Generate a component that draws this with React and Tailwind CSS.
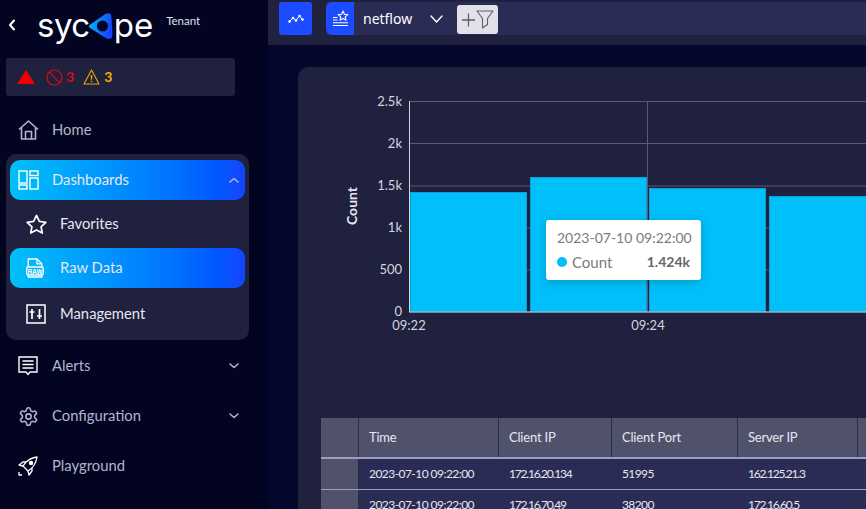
import React from "react";

const font = { fontFamily: "Lato, 'Noto Sans', sans-serif" };

function Chevron({ up, className = "" }) {
  return (
    <svg width="10" height="6" viewBox="0 0 10 6" className={className} fill="none" stroke="currentColor" strokeWidth="1.6" strokeLinecap="round" strokeLinejoin="round">
      <path d={up ? "M1 5 L5 1.5 L9 5" : "M1 1 L5 4.5 L9 1"} />
    </svg>
  );
}

const HomeIcon = () => (
  <svg width="21" height="20" viewBox="0 0 21 20" fill="none" stroke="#b4b6cc" strokeWidth="1.6" strokeLinejoin="round">
    <path d="M1 9.5 L10.5 1 L20 9.5" />
    <path d="M3.5 7.5 V19 H17.5 V7.5" />
    <path d="M7.5 19 V11.5 H13.5 V19" />
  </svg>
);
const DashIcon = () => (
  <svg width="21" height="20" viewBox="0 0 21 20" fill="none" stroke="#fff" strokeWidth="1.4">
    <rect x="1" y="1" width="8" height="12" />
    <rect x="12" y="1" width="8" height="4.5" />
    <rect x="1" y="15" width="8" height="4" />
    <rect x="12" y="8" width="8" height="11" />
  </svg>
);
const StarIcon = () => (
  <svg width="21" height="20" viewBox="0 0 22 21" fill="none" stroke="#fff" strokeWidth="1.8" strokeLinejoin="round">
    <path d="M11 1.5 L14 7.8 L20.8 8.7 L15.8 13.4 L17.1 20 L11 16.7 L4.9 20 L6.2 13.4 L1.2 8.7 L8 7.8 Z" />
  </svg>
);
const RawIcon = () => (
  <svg width="18" height="20" viewBox="0 0 18 20" fill="none" stroke="#fff" strokeWidth="1.3">
    <path d="M2.2 9 V1 H11 L15.8 5.8 V9" />
    <path d="M11 1 V5.8 H15.8" />
    <path d="M2.2 17 V19 H15.8 V17" />
    <rect x="0.7" y="9" width="16.6" height="8" rx="1.5" />
    <text x="9" y="15.6" textAnchor="middle" fontSize="6.5" fontWeight="700" fill="#fff" stroke="none" fontFamily="Liberation Sans">RAW</text>
  </svg>
);
const MgmtIcon = () => (
  <svg width="20" height="20" viewBox="0 0 20 20" fill="none" stroke="#fff" strokeWidth="1.5">
    <rect x="1" y="1" width="18" height="18" />
    <path d="M6 15 V5 M3.5 8 H8.5 M13.5 5 V15 M11 12 H16" strokeWidth="1.7" />
  </svg>
);
const AlertsIcon = () => (
  <svg width="20" height="20" viewBox="0 0 20 20" fill="none" stroke="#fff" strokeWidth="1.4">
    <path d="M1 1 H19 V16 H12 L10 18.5 L8 16 H1 Z" />
    <path d="M4.5 5 H15.5 M4.5 8.5 H15.5 M4.5 12 H15.5" />
  </svg>
);
const GearIcon = () => (
  <svg width="21" height="21" viewBox="0 0 24 24" fill="none" stroke="#b4b6cc" strokeWidth="1.8" strokeLinejoin="round">
    <path d="M12.22 2h-.44a2 2 0 0 0-2 2v.18a2 2 0 0 1-1 1.73l-.43.25a2 2 0 0 1-2 0l-.15-.08a2 2 0 0 0-2.73.73l-.22.38a2 2 0 0 0 .73 2.73l.15.1a2 2 0 0 1 1 1.72v.51a2 2 0 0 1-1 1.74l-.15.09a2 2 0 0 0-.73 2.73l.22.38a2 2 0 0 0 2.73.73l.15-.08a2 2 0 0 1 2 0l.43.25a2 2 0 0 1 1 1.73V20a2 2 0 0 0 2 2h.44a2 2 0 0 0 2-2v-.18a2 2 0 0 1 1-1.73l.43-.25a2 2 0 0 1 2 0l.15.08a2 2 0 0 0 2.73-.73l.22-.39a2 2 0 0 0-.73-2.73l-.15-.08a2 2 0 0 1-1-1.74v-.5a2 2 0 0 1 1-1.74l.15-.09a2 2 0 0 0 .73-2.73l-.22-.38a2 2 0 0 0-2.73-.73l-.15.08a2 2 0 0 1-2 0l-.43-.25a2 2 0 0 1-1-1.73V4a2 2 0 0 0-2-2z" />
    <circle cx="12" cy="12" r="3" />
  </svg>
);
const RocketIcon = () => (
  <svg width="20" height="20" viewBox="0 0 20 20" fill="none" stroke="#fff" strokeWidth="1.3" strokeLinejoin="round">
    <path d="M19 1 C12 2 8 5 5 10 L10 15 C15 12 18 8 19 1 Z" />
    <path d="M5 10 L1 9 L5 6 H8 M10 15 L11 19 L14 15 V12" />
    <circle cx="13" cy="7" r="1.6" fill="#fff" />
    <path d="M1 16 V19 H4" />
  </svg>
);

function NavRow({ icon, label, chevron, className = "" }) {
  return (
    <div className={`flex items-center w-[239px] h-[40px] pl-[18px] ${className}`}>
      <span className="w-[34px] flex items-center">{icon}</span>
      <span className="text-[14.8px] text-[#b4b6cc] flex-1 -translate-y-px">{label}</span>
      {chevron && <Chevron className="text-[#b4b6cc]" />}
    </div>
  );
}

function SubRow({ icon, label, active, className = "" }) {
  return (
    <div className={`flex items-center h-[40px] pl-[16px] rounded-[10px] ${active ? "bg-gradient-to-r from-[#00c0f8] to-[#1444ff]" : ""} ${className}`}>
      <span className="w-[34px] flex items-center">{icon}</span>
      <span className="text-[14.8px] text-[#e6e7f0] -translate-y-px">{label}</span>
    </div>
  );
}

function Sidebar() {
  return (
    <aside className="w-[268px] h-full bg-[#020421] shrink-0 flex flex-col overflow-hidden">
      <div className="h-[58px] flex items-start">
        <svg width="8" height="12" viewBox="0 0 8 12" className="mt-[19px] ml-[8px]" fill="none" stroke="#fff" strokeWidth="2" strokeLinecap="round" strokeLinejoin="round">
          <path d="M6 1.5 L2 6 L6 10.5" />
        </svg>
        <div className="flex items-start ml-[21px] mt-[5px] h-[40px] text-[33px] leading-[40px] text-white" style={{ fontFamily: "Inter, sans-serif" }}>
          <span className="tracking-[-0.5px]">syc</span>
          <svg width="26" height="28" viewBox="0 0 26 28" className="ml-[-2px] mt-[8px] shrink-0">
            <defs>
              <linearGradient id="lg" x1="0" x2="1" y1="0" y2="0.3">
                <stop offset="0" stopColor="#00c0f8" />
                <stop offset="1" stopColor="#1444ff" />
              </linearGradient>
            </defs>
            <path d="M1.5 12 L17 1.2 Q23 -1.5 23.5 4.5 L24.5 21 Q24.5 27.5 18.5 25.5 L2 15 Q0 13.5 1.5 12 Z" fill="url(#lg)" />
            <circle cx="14.5" cy="13" r="5.5" fill="#020421" />
          </svg>
          <span className="ml-[0px]">pe</span>
        </div>
        <span className="text-[11.5px] text-[#dfe0ea] ml-[13px] mt-[12px]">Tenant</span>
      </div>
      <div className="ml-[6px] w-[229px] h-[38px] bg-[#20213f] rounded-[3px] flex items-center pl-[11px]">
        <svg width="18" height="14" viewBox="0 0 18 14"><path d="M9 0 L18 14 H0 Z" fill="#f00000" /></svg>
        <svg width="17" height="17" viewBox="0 0 17 17" className="ml-[11px]" fill="none" stroke="#d90a14" strokeWidth="1.2">
          <circle cx="8.5" cy="8.5" r="7.5" />
          <path d="M3.2 3.2 L13.8 13.8" />
        </svg>
        <span className="text-[14px] font-bold text-[#d90a14] ml-[3px] -translate-y-px">3</span>
        <svg width="17" height="16" viewBox="0 0 17 16" className="ml-[9px]" fill="none" stroke="#f0a800" strokeWidth="1.1" strokeLinejoin="round">
          <path d="M8.5 1 L16 15 H1 Z" />
          <path d="M8.5 6 V10.5 M8.5 11.8 V13" strokeWidth="1.4" />
        </svg>
        <span className="text-[14px] font-bold text-[#f5ae00] ml-[4px] -translate-y-px">3</span>
      </div>
      <NavRow icon={<HomeIcon />} label="Home" className="mt-[14px]" />
      <div className="ml-[6px] w-[243px] mt-[4px] py-[6px] px-[4px] bg-[#20213f] rounded-[10px]">
        <div className="flex items-center h-[40px] pl-[8px] pr-[6px] rounded-[10px] bg-gradient-to-r from-[#00c0f8] to-[#1444ff]">
          <span className="w-[34px] flex items-center"><DashIcon /></span>
          <span className="text-[14.8px] text-[#e6e7f0] flex-1 -translate-y-px">Dashboards</span>
          <Chevron up className="text-[#b4b6cc]" />
        </div>
        <SubRow icon={<StarIcon />} label="Favorites" className="mt-[4px]" />
        <SubRow icon={<RawIcon />} label="Raw Data" active className="mt-[4px]" />
        <SubRow icon={<MgmtIcon />} label="Management" className="mt-[6px]" />
      </div>
      <NavRow icon={<AlertsIcon />} label="Alerts" chevron className="mt-[6px]" />
      <NavRow icon={<GearIcon />} label="Configuration" chevron className="mt-[10px]" />
      <NavRow icon={<RocketIcon />} label="Playground" className="mt-[10px]" />
    </aside>
  );
}

function TopBar() {
  return (
    <div className="h-[45px] bg-[#20213f] flex items-start pt-[2px] pl-[11px] shrink-0">
      <div className="w-[33px] h-[33px] bg-[#1d4bff] rounded-[3px] flex items-center justify-center">
        <svg width="16" height="10" viewBox="0 0 16 10" fill="none" stroke="#fff" strokeWidth="1">
          <path d="M1.5 7.5 L5 4 L8 6.5 L11.5 2 L14.5 5.5" />
          <g fill="#fff" stroke="none">
            <circle cx="1.5" cy="7.5" r="1.3" /><circle cx="5" cy="4" r="1.3" /><circle cx="8" cy="6.5" r="1.3" /><circle cx="11.5" cy="2" r="1.3" /><circle cx="14.5" cy="5.5" r="1.3" />
          </g>
        </svg>
      </div>
      <div className="ml-[14px] flex-1 h-[33px] bg-[#2b2c55] rounded-l-[3px] flex items-center">
        <div className="w-[28px] h-[33px] bg-[#1d4bff] rounded-l-[6px] flex items-center justify-center">
          <svg width="17" height="17" viewBox="0 0 17 17" fill="none" stroke="#fff" strokeWidth="1.1">
            <path d="M11 1 L12.4 4.3 L15.8 4.6 L13.2 6.9 L14 10.3 L11 8.5 L8 10.3 L8.8 6.9 L6.2 4.6 L9.6 4.3 Z" strokeLinejoin="round" />
            <path d="M1 7.5 H5.5 M1 10 H5.5 M1 12.7 H16 M1 15.5 H16" />
          </svg>
        </div>
        <span className="ml-[9px] text-[14px] text-white" style={{ fontFamily: "'Noto Sans', sans-serif" }}>netflow</span>
        <svg width="13" height="8" viewBox="0 0 13 8" className="ml-[18px]" fill="none" stroke="#fff" strokeWidth="1.4" strokeLinecap="round" strokeLinejoin="round">
          <path d="M1 1 L6.5 7 L12 1" />
        </svg>
        <div className="ml-[14px] w-[41px] h-[29px] bg-[#e3e1e8] rounded-[3px] flex items-center justify-center mt-[1px]">
          <svg width="33" height="19" viewBox="0 0 33 19" fill="none" stroke="#5d5c70" strokeWidth="1.1" strokeLinejoin="round">
            <path d="M1 10 H14 M7.5 3.5 V16.5" strokeWidth="1.3" />
            <path d="M16 1 H32 L26.5 8.5 V14.5 L21.5 18 V8.5 Z" />
          </svg>
        </div>
      </div>
    </div>
  );
}

function Tooltip() {
  return (
    <div className="absolute left-[546px] top-[220px] w-[155px] h-[60px] bg-white rounded-[3px] shadow-[0_2px_10px_rgba(0,0,0,0.2)] px-[11px] pt-[9px] text-[#7b7b7b] text-[14px] leading-[18px]">
      <div className="whitespace-nowrap">2023-07-10 09:22:00</div>
      <div className="flex items-center mt-[6px]">
        <span className="w-[10px] h-[10px] rounded-full bg-[#00bff9] mr-[5px]" />
        <span className="flex-1 text-[15px]">Count</span>
        <span className="font-bold text-[#666]">1.424k</span>
      </div>
    </div>
  );
}

function Chart() {
  const bars = [
    { x: 410, w: 117, top: 192 },
    { x: 530, w: 117, top: 177 },
    { x: 649, w: 117, top: 188 },
    { x: 769, w: 118, top: 196 },
  ];
  const ticks = [["2.5k", 101.5, 105.5], ["2k", 143.5, 147.5], ["1.5k", 186, 189.5], ["1k", 228, 231.5], ["500", 270, 273.5], ["0", 312, 315.5]];
  return (
    <svg width="568" height="280" viewBox="0 0 568 280" className="block" style={font}>
      <g transform="translate(-298 -67)">
        {ticks.map(([l, y, by]) => (
          <g key={l}>
            <line x1="409" x2="866" y1={y} y2={y} stroke="#5a5a78" />
            <text x={402} y={by} textAnchor="end" fontSize="13" fill="#d5d5de">{l}</text>
          </g>
        ))}
        <line x1="647.5" x2="647.5" y1="101" y2="312" stroke="#5a5a78" />
        {bars.map((b) => (
          <rect key={b.x} x={b.x + 0.5} y={b.top + 0.5} width={b.w - 1} height={312 - b.top - 1} fill="#00bff9" stroke="#0a9fd8" />
        ))}
        <line x1="409.5" x2="409.5" y1="101" y2="312" stroke="#d5d5de" />
        <line x1="409" x2="866" y1="312" y2="312" stroke="#c8d4e6" />
        <text x="409" y="330" textAnchor="middle" fontSize="13" fill="#d5d5de">09:22</text>
        <text x="648" y="330" textAnchor="middle" fontSize="13" fill="#d5d5de">09:24</text>
        <text transform="translate(356.5 206) rotate(-90)" textAnchor="middle" fontSize="14" fontWeight="700" fill="#e6e6ee">Count</text>
      </g>
    </svg>
  );
}

const cols = ["w-[38px]", "w-[140px]", "w-[113px]", "w-[126px]", "w-[120px]"];

function Table() {
  const rows = [
    ["2023-07-10 09:22:00", "172.16.20.134", "51995", "162.125.21.3"],
    ["2023-07-10 09:22:00", "172.16.70.49", "38200", "172.16.60.5"],
  ];
  const track = ["tracking-[-0.55px]", "tracking-[-1.2px]", "tracking-[-0.6px]", "tracking-[-1.2px]", ""];
  return (
    <div className="mt-[71px] ml-[23px] text-[12px] text-[#e6e7f0]">
      <div className="flex h-[41px] bg-[#50516b] border-b-[2px] border-[#9c9dc0] text-[13px] tracking-[-0.2px]">
        {["", "Time", "Client IP", "Client Port", "Server IP", ""].map((t, i) => (
          <div key={i} className={`${cols[i] || "flex-1"} shrink-0 border-r border-[#2a2b4d] pl-[10px] flex items-center`}>{t}</div>
        ))}
      </div>
      {rows.map((r, ri) => (
        <div key={ri} className="flex h-[31px] bg-[#2b2c55] border-b border-[#9c9dc0]">
          <div className={`${cols[0]} shrink-0 bg-[#50516b] border-r border-[#2a2b4d]`} />
          {[...r, ""].map((t, i) => (
            <div key={i} className={`${cols[i + 1] || "flex-1"} shrink-0 ${track[i]} border-r border-[#2a2b4d] pl-[10px] flex items-center`}>{t}</div>
          ))}
        </div>
      ))}
    </div>
  );
}

export default function App() {
  return (
    <div className="w-[866px] h-[509px] flex overflow-hidden bg-[#020421] relative" style={font}>
      <Sidebar />
      <main className="flex-1 flex flex-col min-w-0 bg-[#05062b]">
        <TopBar />
        <div className="flex-1 pl-[30px] pt-[22px] overflow-hidden">
          <div className="bg-[#20213f] rounded-tl-[10px] h-[442px] overflow-hidden">
            <Chart />
            <Table />
          </div>
        </div>
      </main>
      <Tooltip />
    </div>
  );
}
